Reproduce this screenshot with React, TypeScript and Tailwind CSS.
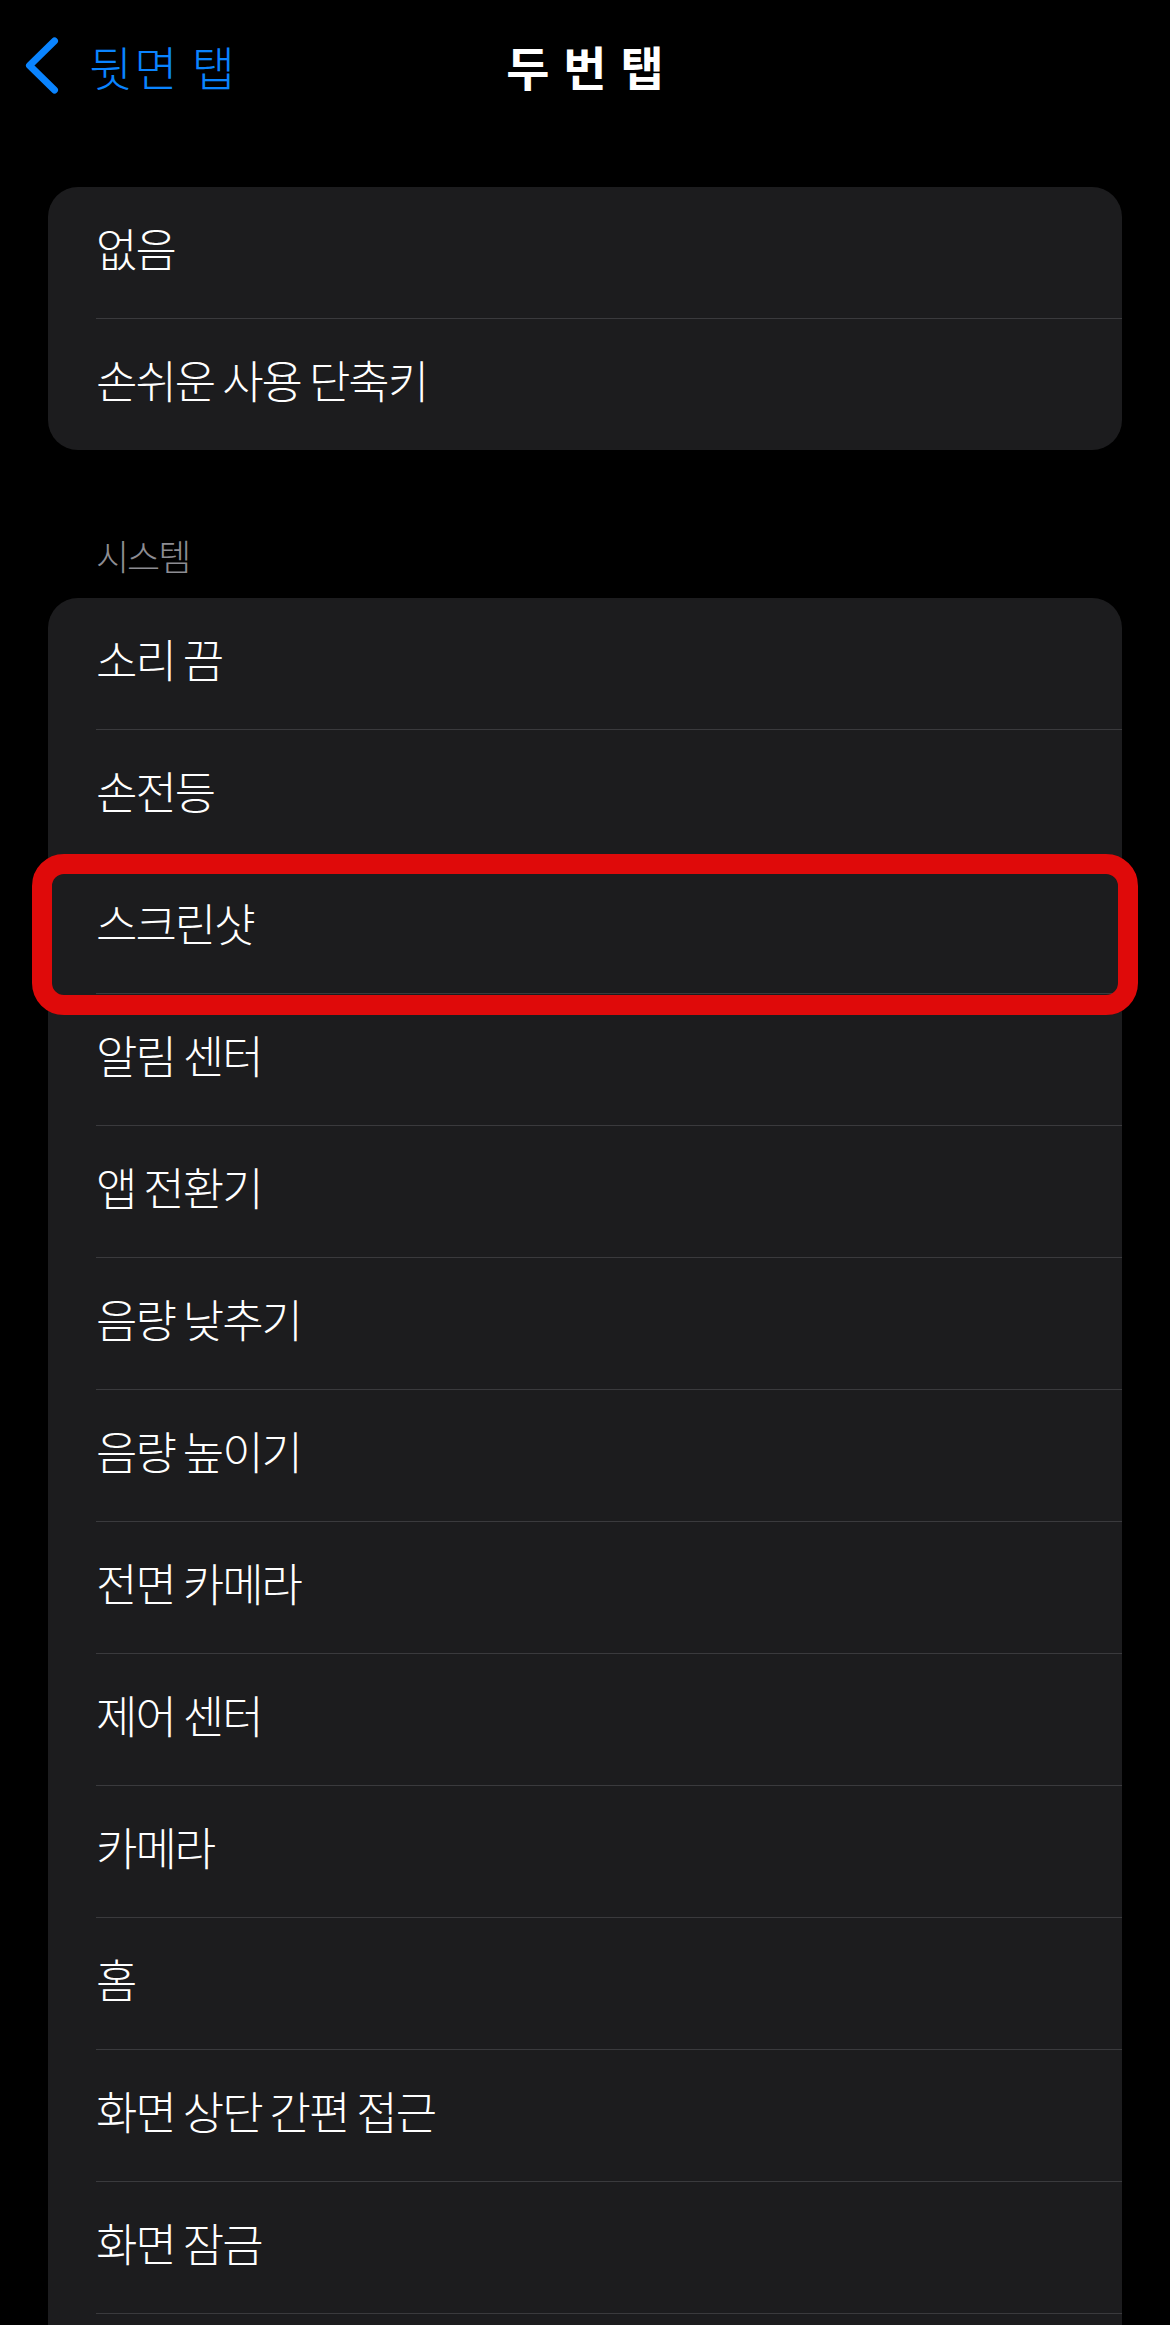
import React from 'react';

// ============================================
// 뒷면 탭 > 두번 탭 설정 화면
// ============================================

const topItems = ['없음', '손쉬운 사용 단축키'];

const systemItems = [
  '소리 끔',
  '손전등',
  '스크린샷',
  '알림 센터',
  '앱 전환기',
  '음량 낮추기',
  '음량 높이기',
  '전면 카메라',
  '제어 센터',
  '카메라',
  '홈',
  '화면 상단 간편 접근',
  '화면 잠금',
];

function BackChevron() {
  return (
    <svg width="40" height="64" viewBox="0 0 40 64" className="shrink-0">
      <path
        d="M30.5 8 L5.5 32.5 L30.5 57"
        fill="none"
        stroke="#0a84ff"
        strokeWidth="7"
        strokeLinecap="round"
        strokeLinejoin="round"
      />
    </svg>
  );
}

interface RowProps {
  label: string;
  last?: boolean;
  highlighted?: boolean;
}

function Row({ label, last, highlighted }: RowProps) {
  return (
    <div className="relative">
      <div className="h-[131px] flex items-center pl-[48px] pb-[11px]">
        <span className="text-[45px] leading-none font-light tracking-[-2px] text-white">{label}</span>
      </div>
      {!last && <div className="ml-[48px] h-px bg-[#3a3a3d]" />}

      {/* 강조 표시 (빨간 테두리) */}
      {highlighted && (
        <div className="absolute -top-[8px] -bottom-[21px] -left-[16px] -right-[16px] rounded-[32px] border-[20px] border-[#df0a0a] pointer-events-none z-10" />
      )}
    </div>
  );
}

export default function App() {
  return (
    <div className="h-[2325px] overflow-hidden bg-black font-['Noto_Sans_CJK_KR','Noto_Sans',sans-serif]">
      {/* 내비게이션 바 */}
      <div className="relative h-[132px] flex items-center">
        <div className="flex items-center pl-[24px] gap-[25px] pb-[2px]">
          <BackChevron />
          <span className="text-[47px] leading-none font-light tracking-[2px] text-[#0a84ff]">뒷면 탭</span>
        </div>
        <div className="absolute inset-0 flex items-center justify-center pb-[2px]">
          <span className="text-[47px] leading-none font-semibold text-white tracking-[14px] pl-[14px]">
            두번탭
          </span>
        </div>
      </div>

      <div className="px-[48px] pt-[55px]">
        {/* 기본 항목 */}
        <div className="rounded-[30px] bg-[#1c1c1e] overflow-hidden">
          {topItems.map((item, idx) => (
            <Row key={item} label={item} last={idx === topItems.length - 1} />
          ))}
        </div>

        {/* 시스템 섹션 */}
        <div className="pt-[86px] pl-[48px] h-[148px]">
          <span className="text-[36px] leading-[39px] font-light tracking-[-2px] text-[#8d8d93]">시스템</span>
        </div>

        <div className="rounded-t-[30px] bg-[#1c1c1e]">
          {systemItems.map((item) => (
            <Row key={item} label={item} highlighted={item === '스크린샷'} />
          ))}
          <div className="h-[131px]" />
        </div>
      </div>
    </div>
  );
}
